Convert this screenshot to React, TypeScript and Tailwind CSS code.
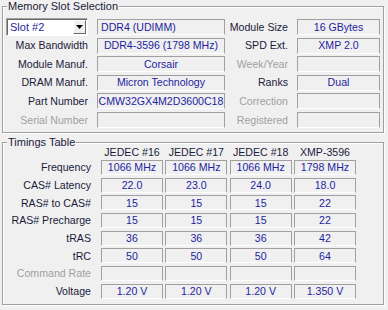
import React from "react";

const font = { fontFamily: '"Liberation Sans", Arial, sans-serif' };

const Group = ({ title, className, children }: { title: string; className: string; children: React.ReactNode }) => (
  <div className={`relative box-border border border-[#a0a0a0] shadow-[inset_1px_1px_0_#fff,1px_1px_0_#fff] ${className}`}>
    <span className="absolute -top-[7px] left-[4px] bg-[#f0f0f0] px-[1px] text-[11px] leading-[12px] text-[#1a1a3a]">
      {title}
    </span>
    {children}
  </div>
);

const Field = ({ value, w, left }: { value?: string; w: string; left?: boolean }) => (
  <div
    className={`${w} h-full box-border flex items-center overflow-hidden whitespace-nowrap border-t border-l border-r border-b border-t-[#a0a0a0] border-l-[#a0a0a0] border-r-[#a0a0a0] border-b-white text-[10.6px] leading-none text-[#1e1ea0] ${
      left ? "justify-start pl-[3px]" : "justify-center"
    }`}
  >
    {value}
  </div>
);

const Label = ({ text, w, dim }: { text: string; w: string; dim?: boolean }) => (
  <div className={`${w} shrink-0 text-right text-[10.6px] leading-none whitespace-nowrap ${dim ? "text-[#a0a0a0]" : "text-[#1a1a3a]"}`}>
    {text}
  </div>
);

const slotRows = [
  { l: "Max Bandwidth", v: "DDR4-3596 (1798 MHz)", rl: "SPD Ext.", rv: "XMP 2.0" },
  { l: "Module Manuf.", v: "Corsair", rl: "Week/Year", rv: "", rdim: true },
  { l: "DRAM Manuf.", v: "Micron Technology", rl: "Ranks", rv: "Dual" },
  { l: "Part Number", v: "CMW32GX4M2D3600C18", rl: "Correction", rv: "", rdim: true },
  { l: "Serial Number", v: "", dim: true, rl: "Registered", rv: "", rdim: true },
];

const timings = [
  { l: "Frequency", v: ["1066 MHz", "1066 MHz", "1066 MHz", "1798 MHz"] },
  { l: "CAS# Latency", v: ["22.0", "23.0", "24.0", "18.0"] },
  { l: "RAS# to CAS#", v: ["15", "15", "15", "22"] },
  { l: "RAS# Precharge", v: ["15", "15", "15", "22"] },
  { l: "tRAS", v: ["36", "36", "36", "42"] },
  { l: "tRC", v: ["50", "50", "50", "64"] },
  { l: "Command Rate", v: ["", "", "", ""], dim: true },
  { l: "Voltage", v: ["1.20 V", "1.20 V", "1.20 V", "1.350 V"] },
];

const headers = ["JEDEC #16", "JEDEC #17", "JEDEC #18", "XMP-3596"];

export default function App() {
  return (
    <div className="w-[388px] h-[310px] bg-[#f0f0f0] pt-[6px] pl-[2px] overflow-hidden" style={font}>
      <Group title="Memory Slot Selection" className="w-[382px] h-[127px]">
        <div className="pt-[12px] pl-[3px] flex flex-col gap-y-[2.6px]">
          <div className="flex items-center h-[16px]">
            <div className="w-[82px] h-[18px] box-border flex items-center bg-white border border-t-[#a0a0a0] border-l-[#a0a0a0] border-r-white border-b-white shadow-[inset_1px_1px_0_#696969]">
              <span className="flex-1 pl-[3px] text-[11px] leading-none text-[#1e1ea0]">Slot #2</span>
              <div className="w-[13px] h-[14px] mr-[1px] box-border flex items-center justify-center bg-[#f0f0f0] border border-t-white border-l-white border-r-[#696969] border-b-[#696969]">
                <svg width="7" height="4" viewBox="0 0 7 4">
                  <path d="M0 0h7L3.5 4z" fill="#000" />
                </svg>
              </div>
            </div>
            <div className="ml-[9px] h-full">
              <Field value="DDR4 (UDIMM)" w="w-[128px]" left />
            </div>
            <Label text="Module Size" w="w-[63px]" />
            <div className="ml-[9px] h-full">
              <Field value="16 GBytes" w="w-[83px]" />
            </div>
          </div>
          {slotRows.map((r) => (
            <div key={r.l} className="flex items-center h-[16px]">
              <Label text={r.l} w="w-[82px]" dim={r.dim} />
              <div className="ml-[9px] h-full">
                <Field value={r.v} w="w-[128px]" />
              </div>
              <Label text={r.rl} w="w-[63px]" dim={r.rdim} />
              <div className="ml-[9px] h-full">
                <Field value={r.rv} w="w-[83px]" />
              </div>
            </div>
          ))}
        </div>
      </Group>

      <Group title="Timings Table" className="mt-[9px] w-[382px] h-[163px]">
        <div className="pt-[3px] pl-[3px]">
          <div className="flex h-[12px] items-center">
            <div className="w-[85px]" />
            <div className="ml-[10px] flex gap-x-[2.33px]">
              {headers.map((h) => (
                <div key={h} className="w-[62px] text-center text-[10.6px] leading-none text-[#1a1a3a] whitespace-nowrap">
                  {h}
                </div>
              ))}
            </div>
          </div>
          <div className="mt-[2px] flex flex-col gap-y-[2.7px]">
            {timings.map((r) => (
              <div key={r.l} className="flex items-center h-[15px]">
                <Label text={r.l} w="w-[85px]" dim={r.dim} />
                <div className="ml-[10px] h-full flex gap-x-[2.33px]">
                  {r.v.map((v, i) => (
                    <Field key={i} value={v} w="w-[62px]" />
                  ))}
                </div>
              </div>
            ))}
          </div>
        </div>
      </Group>
    </div>
  );
}
